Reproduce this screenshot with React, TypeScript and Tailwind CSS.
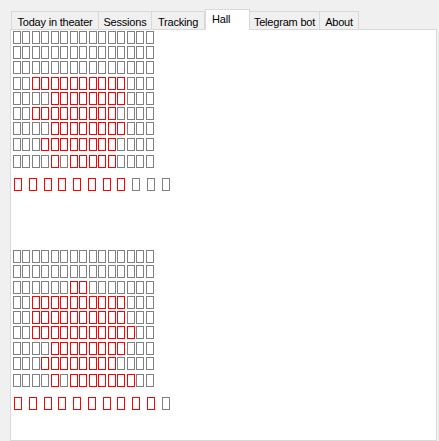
import React from "react";

const tabs = [
  { label: "Today in theater", w: "w-[88px]" },
  { label: "Sessions", w: "w-[54px]" },
  { label: "Tracking", w: "w-[54px]" },
  { label: "Hall", w: "w-[45px]", active: true },
  { label: "Telegram bot", w: "w-[71px]" },
  { label: "About", w: "w-[40px]" },
];

// x = taken seat (red), . = free seat (gray)
const halls = [
  {
    rows: [
      "...............",
      "...............",
      "...............",
      "..xxxxxxxxxx...",
      "....xxxxxxxx...",
      "..xxxxxxxxx....",
      "....xxxxxxxx...",
      "...xxxxxxxx....",
    ],
    extra: "....x.xxxxx....",
    legend: "xxxxxxxx...",
  },
  {
    rows: [
      "...............",
      "...............",
      "......xx.......",
      "..xxxxxxxxxx...",
      "..xxxxxxxxxx...",
      "..xxxxxxxxxxx..",
      "....xxxxxxxx...",
      "...xxxxxxxx....",
    ],
    extra: "....x.xxxxxxx..",
    legend: "xxxxxxxxxx.",
  },
];

function Seat({ taken, cell }: { taken: boolean; cell: string }) {
  return (
    <span className={`block ${cell} shrink-0`}>
      <span
        className={`block w-[8px] h-[13px] border ${
          taken ? "border-[#ff0000]" : "border-[#808080]"
        }`}
      />
    </span>
  );
}

function SeatRow({ row, cell }: { row: string; cell: string }) {
  return (
    <div className="flex">
      {row.split("").map((c, i) => (
        <Seat key={i} taken={c === "x"} cell={cell} />
      ))}
    </div>
  );
}

function Hall({ hall }: { hall: (typeof halls)[number] }) {
  return (
    <div className="flex flex-col">
      <div className="flex flex-col gap-[2.29px]">
        {hall.rows.map((r, i) => (
          <SeatRow key={i} row={r} cell="w-[9.52px]" />
        ))}
      </div>
      <div className="mt-[4.3px]">
        <SeatRow row={hall.extra} cell="w-[9.52px]" />
      </div>
      <div className="mt-[9.7px] pl-[1.3px]">
        <SeatRow row={hall.legend} cell="w-[14.77px]" />
      </div>
    </div>
  );
}

export default function App() {
  return (
    <div
      className="w-[439px] h-[441px] bg-[#f0f0f0] flex flex-col overflow-hidden text-black"
      style={{ fontFamily: '"Liberation Sans", Arial, sans-serif' }}
    >
      <div className="flex items-end h-[29px] pl-[11px] relative z-10">
        {tabs.map((t) =>
          t.active ? (
            <div
              key={t.label}
              className={`${t.w} h-[21px] -mb-px bg-white border border-b-0 border-[#d9d9d9] text-[11px] tracking-[-0.2px] leading-[14px] pt-[2px] pl-[6px]`}
            >
              {t.label}
            </div>
          ) : (
            <div
              key={t.label}
              className={`${t.w} h-[18px] bg-[#f0f0f0] border border-b-0 border-[#d9d9d9] -ml-px first:ml-0 text-[11px] tracking-[-0.2px] leading-[14px] pt-[3px] text-center whitespace-nowrap`}
            >
              {t.label}
            </div>
          )
        )}
      </div>
      <div className="ml-[10px] w-[427px] flex-1 bg-white border border-[#d9d9d9] pt-[0.7px] pl-[1.7px]">
        <div className="flex flex-col gap-[59.3px]">
          {halls.map((h, i) => (
            <Hall key={i} hall={h} />
          ))}
        </div>
      </div>
    </div>
  );
}
